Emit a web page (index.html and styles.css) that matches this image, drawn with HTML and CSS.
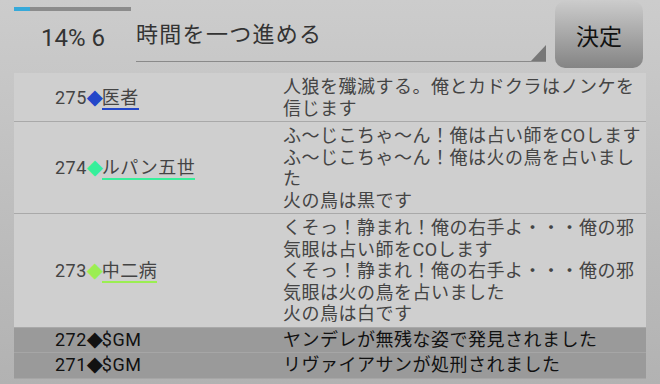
FILE: index.html
```html
<!DOCTYPE html>
<html lang="ja">
  <head>
    <meta charset="UTF-8" />
    <meta name="viewport" content="width=device-width, initial-scale=1.0" />
    <title>人狼ログ</title>
    <link rel="stylesheet" href="styles.css">
  </head>
  <body>
    <div class="top">
      <div class="status">
        <div class="progress"><span style="width: 14%"></span></div>
        <div class="count">14% 6</div>
      </div>
      <div class="spinner">時間を一つ進める</div>
      <button class="decide">決定</button>
    </div>

    <div class="log">
      <div class="row">
        <div class="who">275<span class="mark blue">◆</span><span class="name blue">医者</span></div>
        <div class="msg">人狼を殲滅する。俺とカドクラはノンケを<br />信じます</div>
      </div>
      <div class="row">
        <div class="who">274<span class="mark green">◆</span><span class="name green">ルパン五世</span></div>
        <div class="msg">
          ふ〜じこちゃ〜ん！俺は占い師をCOします<br />
          ふ〜じこちゃ〜ん！俺は火の鳥を占いまし<br />
          た<br />
          火の鳥は黒です
        </div>
      </div>
      <div class="row">
        <div class="who">273<span class="mark lime">◆</span><span class="name lime">中二病</span></div>
        <div class="msg">
          くそっ！静まれ！俺の右手よ・・・俺の邪<br />
          気眼は占い師をCOします<br />
          くそっ！静まれ！俺の右手よ・・・俺の邪<br />
          気眼は火の鳥を占いました<br />
          火の鳥は白です
        </div>
      </div>
      <div class="row system">
        <div class="who">272<span class="mark">◆</span>$GM</div>
        <div class="msg">ヤンデレが無残な姿で発見されました</div>
      </div>
      <div class="row system">
        <div class="who">271<span class="mark">◆</span>$GM</div>
        <div class="msg">リヴァイアサンが処刑されました</div>
      </div>
    </div>
  </body>
</html>
```

FILE: styles.css
```css
html,
body {
  height: 100%;
  overflow: hidden;
}
body {
  margin: 0;
  padding: 0 14px;
  background: linear-gradient(#cccccc, #b2b2b2);
  font-family: Roboto, "Noto Sans CJK JP", sans-serif;
  color: #444;
}
.top {
  display: flex;
  height: 73px;
}
.status {
  width: 122px;
  flex: none;
  padding-top: 7px;
}
.progress {
  width: 117px;
  height: 4px;
  background: #8c8c8c;
}
.progress span {
  display: block;
  height: 100%;
  background: #36a9d9;
}
.count {
  margin: 15px 0 0 27px;
  font-size: 24px;
  line-height: 24px;
  color: #333;
}
.spinner {
  position: relative;
  flex: 1;
  box-sizing: border-box;
  height: 62px;
  padding-top: 16px;
  border-bottom: 1px solid #8a8a8a;
  font-size: 22px;
  letter-spacing: 1.3px;
  color: #333;
}
.spinner::after {
  content: "";
  position: absolute;
  right: 0;
  bottom: 0;
  width: 15px;
  height: 16px;
  background: #777;
  clip-path: polygon(100% 0, 100% 100%, 0 100%);
}
.decide {
  flex: none;
  width: 88px;
  height: 67px;
  margin: 1px 3px 0 9px;
  padding: 0;
  border: 0;
  border-radius: 10px;
  background: linear-gradient(#cbcbcb, #848484);
  font-family: "Noto Sans CJK JP", sans-serif;
  font-size: 23px;
  color: #111;
}
.log {
  background: #cfcfcf;
  font-size: 18px;
  letter-spacing: 0.5px;
  line-height: 21.5px;
}
.row {
  display: grid;
  grid-template-columns: 269px 1fr;
  padding: 3px 0 2px;
  border-bottom: 1px solid #a9a9a9;
}
.who {
  align-self: center;
  padding-left: 41px;
  white-space: nowrap;
}
.msg {
  white-space: nowrap;
}
.row.system {
  padding: 1px 0 2px;
  background: #9a9a9a;
  border-bottom-color: #a6a6a6;
  color: #111;
}
.mark {
  display: inline-block;
  width: 14px;
  margin-right: 1px;
  font-family: "DejaVu Sans", sans-serif;
  font-size: 21px;
  line-height: 0;
  letter-spacing: 0;
  text-align: center;
}
.mark.blue {
  color: #2347c9;
}
.mark.green {
  color: #36ef9a;
}
.mark.lime {
  color: #9bee52;
}
.name {
  border-bottom: 2px solid;
}
.name.blue {
  border-color: #2347c9;
}
.name.green {
  border-color: #36ef9a;
}
.name.lime {
  border-color: #9bee52;
}
```
